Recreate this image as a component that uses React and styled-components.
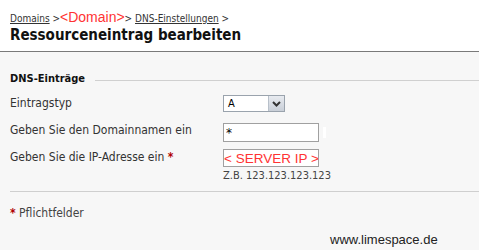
import React from "react";
import styled, { createGlobalStyle } from "styled-components";

const GlobalStyle = createGlobalStyle`
  html, body {
    margin: 0;
    padding: 0;
    background: #f7f7f7;
  }
  body {
    font-family: "DejaVu Sans Condensed", "DejaVu Sans", sans-serif;
    font-size: 12px;
    color: #333;
  }
`;

const Page = styled.div`
  width: 479px;
  height: 250px;
  overflow: hidden;
`;

const Header = styled.div`
  background: #fff;
  border-bottom: 1px solid #7a7a7a;
  height: 52px;
  box-sizing: border-box;
  padding: 9px 10px 0;
`;

const Crumbs = styled.div`
  height: 16px;
  line-height: 16px;
  font-size: 10px;
  color: #333;
  white-space: nowrap;
`;

const CrumbLink = styled.a`
  color: #333;
  text-decoration: underline;
`;

const Current = styled.span`
  color: #ff3333;
  font-family: "Liberation Sans", Arial, sans-serif;
  font-size: 14px;
`;

const Title = styled.h1`
  margin: 1px 0 0;
  font-size: 15px;
  font-weight: bold;
  color: #111;
  line-height: 18px;
`;

const Main = styled.div`
  padding: 18px 0 0 10px;
`;

const SectionHead = styled.div`
  display: flex;
  align-items: center;
  gap: 10px;
  height: 16px;
`;

const SectionTitle = styled.h2`
  margin: 0;
  font-size: 11px;
  font-weight: bold;
  color: #111;
`;

const Rule = styled.div`
  flex: 1;
  border-top: 1px solid #d0d0d0;
  margin-top: 4px;
`;

const Row = styled.div`
  display: flex;
  align-items: flex-start;
  margin-top: ${(p) => p.$mt}px;
`;

const Label = styled.div`
  width: 213px;
  flex: none;
  padding-top: ${(p) => p.$pt || 0}px;
  line-height: 14px;
  color: #333;
`;

const Star = styled.span`
  color: #b00000;
  font-weight: bold;
`;

const Field = styled.div`
  display: flex;
  align-items: center;
  gap: 4px;
`;

const SelectBox = styled.div`
  width: 62px;
  height: 17px;
  box-sizing: border-box;
  border: 1px solid #9aa3ad;
  background: #fff;
  display: flex;
  align-items: stretch;
`;

const SelectValue = styled.span`
  flex: 1;
  padding-left: 4px;
  line-height: 15px;
  color: #000;
  font-size: 11px;
`;

const SelectButton = styled.span`
  width: 15px;
  background: linear-gradient(#e8ebf0, #c9cfd8);
  border-left: 1px solid #b8c0ca;
  display: flex;
  align-items: center;
  justify-content: center;
`;

const TextInput = styled.input`
  display: block;
  width: 96px;
  height: ${(p) => p.$h || 19}px;
  box-sizing: border-box;
  border: 1px solid #a0a0a0;
  background: #fff;
  padding: 0 ${(p) => (p.$red ? 0 : 2)}px;
  margin: 0;
  font-family: ${(p) => (p.$red ? '"Liberation Sans", Arial, sans-serif' : '"DejaVu Sans", sans-serif')};
  font-size: ${(p) => (p.$red ? 13.5 : 12)}px;
  color: ${(p) => (p.$red ? "#ff3333" : "#000")};
  outline: none;
`;

const Marker = styled.span`
  width: 3px;
  height: 11px;
  background: #fff;
`;

const Hint = styled.div`
  margin-top: 2px;
  color: #444;
  font-size: 11px;
  line-height: 13px;
`;

const Divider = styled.div`
  border-top: 1px solid #cfcfcf;
  margin-top: 9px;
`;

const Required = styled.div`
  margin-top: 14px;
  color: #444;
`;

const Footer = styled.div`
  margin-top: 12px;
  padding-left: 330px;
  font-family: "Liberation Sans", Arial, sans-serif;
  font-size: 13px;
  line-height: 15px;
  color: #222;
`;

export default function App() {
  return (
    <Page>
      <GlobalStyle />
      <Header>
        <Crumbs>
          <CrumbLink href="#">Domains</CrumbLink> &gt;<Current>&lt;Domain&gt;</Current>&gt;{" "}
          <CrumbLink href="#">DNS-Einstellungen</CrumbLink> &gt;
        </Crumbs>
        <Title>Ressourceneintrag bearbeiten</Title>
      </Header>
      <Main>
        <SectionHead>
          <SectionTitle>DNS-Einträge</SectionTitle>
          <Rule />
        </SectionHead>
        <Row $mt={9}>
          <Label $pt={1}>Eintragstyp</Label>
          <Field>
            <SelectBox>
              <SelectValue>A</SelectValue>
              <SelectButton>
                <svg width="9" height="6" viewBox="0 0 9 6">
                  <path d="M1 1 L4.5 4.5 L8 1" stroke="#333" strokeWidth="2" fill="none" />
                </svg>
              </SelectButton>
            </SelectBox>
          </Field>
        </Row>
        <Row $mt={11}>
          <Label $pt={0}>Geben Sie den Domainnamen ein</Label>
          <Field>
            <TextInput defaultValue="*" />
            <Marker />
          </Field>
        </Row>
        <Row $mt={7}>
          <Label $pt={1}>
            Geben Sie die IP-Adresse ein <Star>*</Star>
          </Label>
          <div>
            <TextInput $red $h={18} defaultValue="< SERVER IP >" />
            <Hint>Z.B. 123.123.123.123</Hint>
          </div>
        </Row>
        <Divider />
        <Required>
          <Star>*</Star> Pflichtfelder
        </Required>
      </Main>
      <Footer>www.limespace.de</Footer>
    </Page>
  );
}
